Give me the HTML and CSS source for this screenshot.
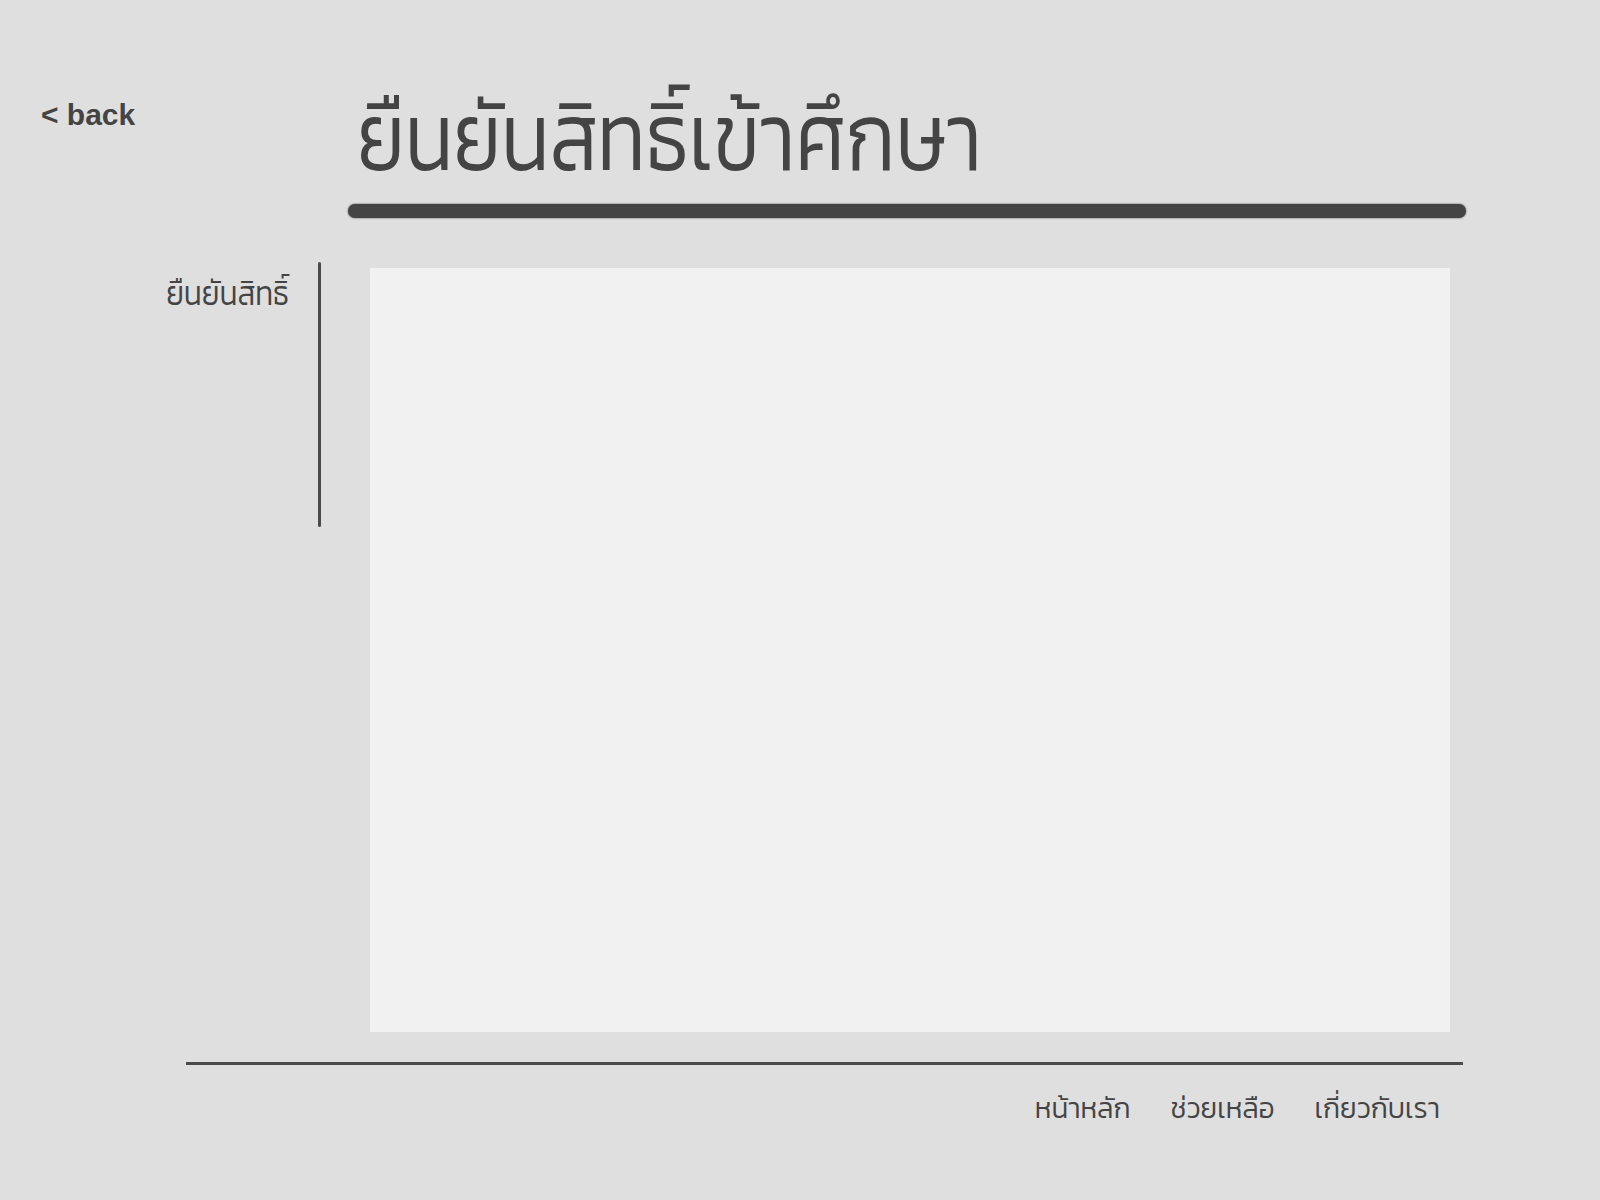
FILE: index.html
```html
<!DOCTYPE html>
<html lang="th">
<head>
<meta charset="utf-8">
<title>ยืนยันสิทธิ์เข้าศึกษา</title>
<link rel="stylesheet" href="styles.css">
</head>
<body>
<div class="page">
  <header class="header">
    <a class="back" href="#">&lt; back</a>
    <div class="title-area">
      <h1 class="title">ยืนยันสิทธิ์เข้าศึกษา</h1>
      <div class="title-bar"></div>
    </div>
  </header>
  <main class="main">
    <aside class="side">
      <div class="side-label">ยืนยันสิทธิ์</div>
    </aside>
    <div class="vline"></div>
    <section class="content"></section>
  </main>
  <footer class="footer">
    <div class="foot-line"></div>
    <nav class="links">
      <a href="#">หน้าหลัก</a>
      <a href="#">ช่วยเหลือ</a>
      <a href="#">เกี่ยวกับเรา</a>
    </nav>
  </footer>
</div>
</body>
</html>
```
FILE: styles.css
```css
html, body {
  margin: 0;
  padding: 0;
  background: #dfdfdf;
}
.page {
  width: 1600px;
  height: 1200px;
  background: #dfdfdf;
  color: #444;
  font-family: "Kanit", "Noto Sans Thai", sans-serif;
  font-weight: 300;
}
a { color: #444; text-decoration: none; }

.header {
  display: flex;
  align-items: flex-start;
  height: 268px;
  box-sizing: border-box;
}
.back {
  font-family: "Liberation Sans", Arial, sans-serif;
  font-weight: 700;
  font-size: 30px;
  line-height: 30px;
  margin-left: 41px;
  margin-top: 100px;
  width: 307px;
  color: #444;
}
.title-area {
  width: 1118px;
  padding-top: 60px;
}
.title {
  margin: 0 0 0 9px;
  font-size: 81px;
  font-weight: 300;
  line-height: 130px;
  height: 130px;
  transform: scaleY(1.18);
  transform-origin: top;
}
.title-bar {
  margin-top: 14px;
  height: 14px;
  border-radius: 7px;
  background: #444;
  box-shadow: 0 0 2px #444;
}

.main {
  display: flex;
  align-items: flex-start;
}
.side {
  width: 318px;
  box-sizing: border-box;
  padding-right: 29px;
  text-align: right;
}
.side-label {
  font-size: 30px;
  line-height: 50px;
  margin-top: 2px;
  transform: scaleY(1.13);
  transform-origin: 50% 37px;
}
.vline {
  width: 3px;
  height: 265px;
  margin-top: -6px;
  border-radius: 2px;
  background: #4a4a4a;
}
.content {
  margin-left: 49px;
  width: 1080px;
  height: 764px;
  background: #f1f1f1;
}

.footer {
  padding-top: 30px;
}
.foot-line {
  margin-left: 186px;
  width: 1277px;
  height: 3px;
  background: #4a4a4a;
}
.links {
  display: flex;
  justify-content: flex-end;
  gap: 40px;
  width: 1440px;
  margin-top: 18px;
  font-size: 28px;
  line-height: 50px;
}
```
